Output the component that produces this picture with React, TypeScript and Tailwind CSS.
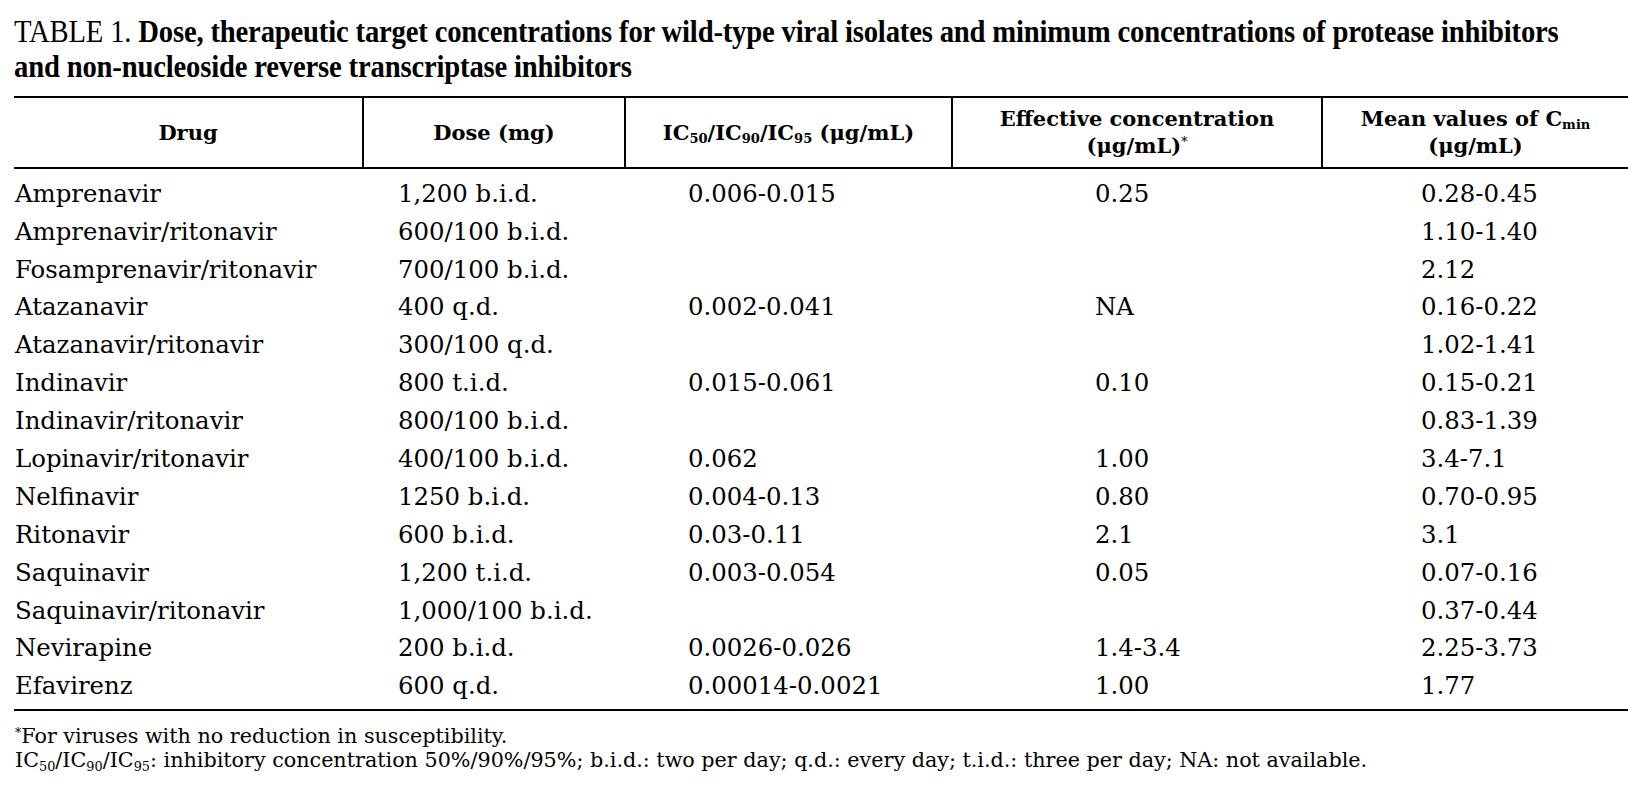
import React from "react";

const rows: [string, string, string, string, string][] = [
  ["Amprenavir", "1,200 b.i.d.", "0.006-0.015", "0.25", "0.28-0.45"],
  ["Amprenavir/ritonavir", "600/100 b.i.d.", "", "", "1.10-1.40"],
  ["Fosamprenavir/ritonavir", "700/100 b.i.d.", "", "", "2.12"],
  ["Atazanavir", "400 q.d.", "0.002-0.041", "NA", "0.16-0.22"],
  ["Atazanavir/ritonavir", "300/100 q.d.", "", "", "1.02-1.41"],
  ["Indinavir", "800 t.i.d.", "0.015-0.061", "0.10", "0.15-0.21"],
  ["Indinavir/ritonavir", "800/100 b.i.d.", "", "", "0.83-1.39"],
  ["Lopinavir/ritonavir", "400/100 b.i.d.", "0.062", "1.00", "3.4-7.1"],
  ["Nelfinavir", "1250 b.i.d.", "0.004-0.13", "0.80", "0.70-0.95"],
  ["Ritonavir", "600 b.i.d.", "0.03-0.11", "2.1", "3.1"],
  ["Saquinavir", "1,200 t.i.d.", "0.003-0.054", "0.05", "0.07-0.16"],
  ["Saquinavir/ritonavir", "1,000/100 b.i.d.", "", "", "0.37-0.44"],
  ["Nevirapine", "200 b.i.d.", "0.0026-0.026", "1.4-3.4", "2.25-3.73"],
  ["Efavirenz", "600 q.d.", "0.00014-0.0021", "1.00", "1.77"],
];

const Sub = ({ children }: { children: React.ReactNode }) => (
  <sub className="text-[0.62em]">{children}</sub>
);

export default function App() {
  return (
    <div className="w-[1628px] h-[786px] bg-white text-black overflow-hidden font-['DejaVu_Serif',serif]">
      {/* Title */}
      <div className="pl-[14px] pt-[14px] h-[96px]">
        <div className="origin-left scale-x-[0.925] w-[1800px] font-['Liberation_Serif',serif] text-[31px] leading-[35px] tracking-[-0.2px]">
          <span className="font-normal">TABLE 1. </span>
          <span className="font-bold">
            Dose, therapeutic target concentrations for wild-type viral isolates and minimum concentrations of protease inhibitors
            <br />
            and non-nucleoside reverse transcriptase inhibitors
          </span>
        </div>
      </div>

      {/* Table */}
      <div className="ml-[14px]">
        {/* header */}
        <div className="grid grid-cols-[348px_262px_327px_370px_1fr] border-t-2 border-b-2 border-black h-[73px] font-bold text-[21px] leading-[27px]">
          <div className="flex items-center justify-center">Drug</div>
          <div className="flex items-center justify-center border-l-2 border-black">Dose (mg)</div>
          <div className="flex items-center justify-center border-l-2 border-black">
            <span>
              IC<Sub>50</Sub>/IC<Sub>90</Sub>/IC<Sub>95</Sub> (μg/mL)
            </span>
          </div>
          <div className="flex flex-col items-center justify-center border-l-2 border-black text-center pb-[2px]">
            <span>Effective concentration</span>
            <span>
              (μg/mL)<sup className="text-[0.6em] font-normal">*</sup>
            </span>
          </div>
          <div className="flex flex-col items-center justify-center border-l-2 border-black text-center pb-[2px]">
            <span>
              Mean values of C<Sub>min</Sub>
            </span>
            <span>(μg/mL)</span>
          </div>
        </div>

        {/* body */}
        <div className="border-b-2 border-black pt-[6px] pb-[4px] text-[24.4px]">
          {rows.map((r) => (
            <div
              key={r[0]}
              className="grid grid-cols-[383px_290px_407px_326px_1fr] h-[37.9px] items-center pl-[1px] leading-none"
            >
              <div>{r[0]}</div>
              <div>{r[1]}</div>
              <div>{r[2]}</div>
              <div>{r[3]}</div>
              <div>{r[4]}</div>
            </div>
          ))}
        </div>

        {/* footnotes */}
        <div className="pt-[13px] pl-[1px] text-[20.7px] leading-[24px]">
          <div>
            <sup className="text-[0.6em]">*</sup>For viruses with no reduction in susceptibility.
          </div>
          <div>
            IC<Sub>50</Sub>/IC<Sub>90</Sub>/IC<Sub>95</Sub>: inhibitory concentration 50%/90%/95%; b.i.d.: two per day; q.d.: every day; t.i.d.: three per day; NA: not available.
          </div>
        </div>
      </div>
    </div>
  );
}
